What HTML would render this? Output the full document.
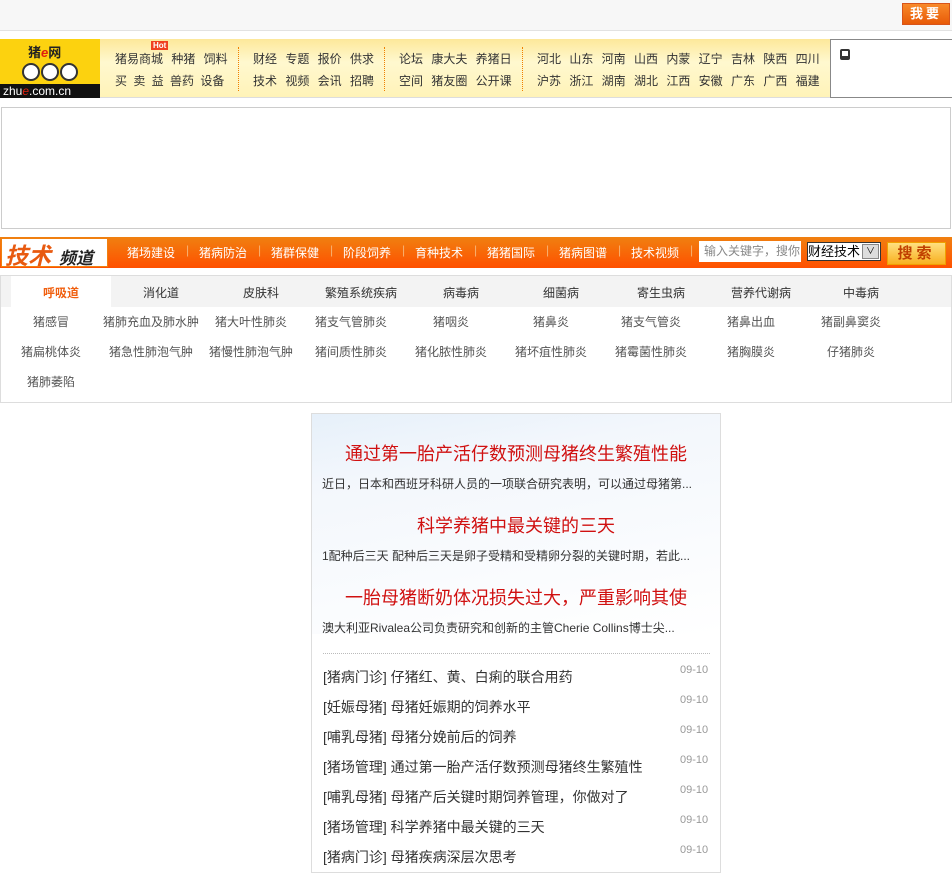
<!DOCTYPE html>
<html><head><meta charset="utf-8">
<style>
*{margin:0;padding:0;box-sizing:border-box}
body{width:952px;height:865px;overflow:hidden;background:#fff;font-family:"Liberation Sans","Noto Sans CJK SC","WenQuanYi Zen Hei",sans-serif;font-size:12px;color:#333;position:relative}
.a{position:absolute;white-space:nowrap}
.top{left:0;top:0;width:952px;height:31px;background:#f7f7f7;border-bottom:1px solid #e2e2e2}
.btn{left:902px;top:3px;width:48px;height:22px;background:linear-gradient(#f88a2a,#e85a08);border:1px solid #d8541a;color:#fff;font-weight:bold;font-size:13px;text-align:center;line-height:20px;letter-spacing:3px}
.hdr{left:100px;top:39px;width:730px;height:59px;background:linear-gradient(#fde89a,#fff8cf 40%,#fff3b8);border-bottom:1px solid #ddd}
.logo{left:0;top:39px;width:100px;height:59px;background:#fcd20f}
.nav{font-size:12px;color:#333;word-spacing:5px}
.dv{border-left:1px dotted #f08000;height:44px;top:47px}
.rbox{left:830px;top:39px;width:122px;height:59px;border:1px solid #888;border-right:none;background:#fff}
.ad{left:1px;top:107px;width:950px;height:122px;border:1px solid #ccc}
.obar{left:0;top:237px;width:952px;height:31px;background:linear-gradient(#f08010,#ff5000)}
.ob{color:#fff;font-size:12px;top:244px}
.sep{color:#f9b070;top:243px;font-size:12px}
.sub{left:0;top:275px;width:952px;height:128px;border:1px solid #ddd}
.tabs{left:1px;top:276px;width:950px;height:31px;background:#f3f3f3}
.tab{top:284px;width:100px;text-align:center;font-size:12px;color:#333}
.lk{width:100px;text-align:center;font-size:12px;color:#555}
.box{left:311px;top:413px;width:410px;height:460px;border:1px solid #ddd;background:linear-gradient(170deg,#e6f0fa 0,#f3f7fc 25%,#fff 100%) top/100% 220px no-repeat,#fff}
.t{left:311px;width:410px;text-align:center;color:#d01010;font-size:18px}
.d{left:322px;font-size:12px;color:#333}
.li{left:323px;font-size:14px;color:#333}
.dt{left:680px;font-size:11px;color:#999}
.c{position:absolute;top:24px;width:18px;height:18px;border-radius:50%;background:#fff;border:2px solid #333}
</style></head><body>
<div class="a top"></div>
<div class="a btn">我要</div>

<div class="a hdr"></div>
<div class="a logo">
  <div class="a" style="left:28px;top:3px;font-size:13px;color:#222;font-weight:bold">猪<span style="color:#e02010;font-style:italic">e</span>网</div>
  <div class="c" style="left:22px"></div>
  <div class="c" style="left:41px"></div>
  <div class="c" style="left:60px"></div>
  <div class="a" style="left:0;top:45px;width:100px;height:14px;background:#111;color:#fff;font-size:12px;line-height:14px;padding-left:3px">zhu<span style="color:#e02010;font-style:italic">e</span>.com.cn</div>
</div>
<div class="a" style="left:151px;top:41px;background:#f04020;color:#fff;font-size:8px;font-weight:bold;padding:0 2px;line-height:9px">Hot</div>
<div class="a nav" style="left:115px;top:50px">猪易商城 种猪 饲料</div>
<div class="a nav" style="left:115px;top:72px;word-spacing:3px">买 卖 益 兽药 设备</div>
<div class="a dv" style="left:238px"></div>
<div class="a nav" style="left:253px;top:50px">财经 专题 报价 供求</div>
<div class="a nav" style="left:253px;top:72px">技术 视频 会讯 招聘</div>
<div class="a dv" style="left:384px"></div>
<div class="a nav" style="left:399px;top:50px">论坛 康大夫 养猪日</div>
<div class="a nav" style="left:399px;top:72px">空间 猪友圈 公开课</div>
<div class="a dv" style="left:522px"></div>
<div class="a nav" style="left:537px;top:50px">河北 山东 河南 山西 内蒙 辽宁 吉林 陕西 四川</div>
<div class="a nav" style="left:537px;top:72px">沪苏 浙江 湖南 湖北 江西 安徽 广东 广西 福建</div>
<div class="a rbox"><div class="a" style="left:9px;top:9px;width:10px;height:11px;border:2px solid #333;border-bottom-width:4px;border-radius:2px"></div></div>

<div class="a ad"></div>

<div class="a obar"></div>
<div class="a" style="left:1px;top:238px;width:107px;height:29px;background:#fff;border:1px solid #f08010"><span class="a" style="left:3px;top:-2px;font-size:23px;color:#e85a10;font-style:italic;font-weight:bold">技术</span><span class="a" style="left:57px;top:5px;font-size:17px;color:#222;font-style:italic;font-weight:bold">频道</span></div>
<div class="a ob" style="left:127px">猪场建设</div><div class="a sep" style="left:186px">|</div>
<div class="a ob" style="left:199px">猪病防治</div><div class="a sep" style="left:258px">|</div>
<div class="a ob" style="left:271px">猪群保健</div><div class="a sep" style="left:330px">|</div>
<div class="a ob" style="left:343px">阶段饲养</div><div class="a sep" style="left:402px">|</div>
<div class="a ob" style="left:415px">育种技术</div><div class="a sep" style="left:474px">|</div>
<div class="a ob" style="left:487px">猪猪国际</div><div class="a sep" style="left:546px">|</div>
<div class="a ob" style="left:559px">猪病图谱</div><div class="a sep" style="left:618px">|</div>
<div class="a ob" style="left:631px">技术视频</div><div class="a sep" style="left:690px">|</div>
<div class="a" style="left:699px;top:241px;width:102px;height:21px;background:#fff;color:#888;font-size:12px;line-height:20px;padding-left:5px;overflow:hidden">输入关键字，搜你</div>
<div class="a" style="left:807px;top:242px;width:74px;height:19px;background:#fff;border:1px solid #333;font-size:13px;line-height:17px;color:#000">财经技术<span class="a" style="right:1px;top:1px;width:17px;height:15px;background:#ddd;border:1px solid #888;font-size:9px;text-align:center;line-height:13px">∨</span></div>
<div class="a" style="left:887px;top:242px;width:59px;height:23px;background:linear-gradient(#ffe080,#f8b020);border:1px solid #f0a000;color:#c04000;font-weight:bold;font-size:15px;text-align:center;line-height:21px;letter-spacing:4px">搜索</div>

<div class="a sub"></div>
<div class="a tabs"></div>
<div class="a" style="left:11px;top:276px;width:100px;height:31px;background:#fff"></div>
<div class="a tab" style="left:11px;color:#f06010;font-weight:bold">呼吸道</div>
<div class="a tab" style="left:111px">消化道</div>
<div class="a tab" style="left:211px">皮肤科</div>
<div class="a tab" style="left:311px">繁殖系统疾病</div>
<div class="a tab" style="left:411px">病毒病</div>
<div class="a tab" style="left:511px">细菌病</div>
<div class="a tab" style="left:611px">寄生虫病</div>
<div class="a tab" style="left:711px">营养代谢病</div>
<div class="a tab" style="left:811px">中毒病</div>

<div class="a lk" style="left:1px;top:313px">猪感冒</div>
<div class="a lk" style="left:101px;top:313px">猪肺充血及肺水肿</div>
<div class="a lk" style="left:201px;top:313px">猪大叶性肺炎</div>
<div class="a lk" style="left:301px;top:313px">猪支气管肺炎</div>
<div class="a lk" style="left:401px;top:313px">猪咽炎</div>
<div class="a lk" style="left:501px;top:313px">猪鼻炎</div>
<div class="a lk" style="left:601px;top:313px">猪支气管炎</div>
<div class="a lk" style="left:701px;top:313px">猪鼻出血</div>
<div class="a lk" style="left:801px;top:313px">猪副鼻窦炎</div>
<div class="a lk" style="left:1px;top:343px">猪扁桃体炎</div>
<div class="a lk" style="left:101px;top:343px">猪急性肺泡气肿</div>
<div class="a lk" style="left:201px;top:343px">猪慢性肺泡气肿</div>
<div class="a lk" style="left:301px;top:343px">猪间质性肺炎</div>
<div class="a lk" style="left:401px;top:343px">猪化脓性肺炎</div>
<div class="a lk" style="left:501px;top:343px">猪坏疽性肺炎</div>
<div class="a lk" style="left:601px;top:343px">猪霉菌性肺炎</div>
<div class="a lk" style="left:701px;top:343px">猪胸膜炎</div>
<div class="a lk" style="left:801px;top:343px">仔猪肺炎</div>
<div class="a lk" style="left:1px;top:373px">猪肺萎陷</div>

<div class="a box"></div>
<div class="a t" style="top:440px">通过第一胎产活仔数预测母猪终生繁殖性能</div>
<div class="a d" style="top:475px">近日，日本和西班牙科研人员的一项联合研究表明，可以通过母猪第...</div>
<div class="a t" style="top:512px">科学养猪中最关键的三天</div>
<div class="a d" style="top:547px">1配种后三天 配种后三天是卵子受精和受精卵分裂的关键时期，若此...</div>
<div class="a t" style="top:584px">一胎母猪断奶体况损失过大，严重影响其使</div>
<div class="a d" style="top:619px">澳大利亚Rivalea公司负责研究和创新的主管Cherie Collins博士尖...</div>
<div class="a" style="left:323px;top:653px;width:387px;border-top:1px dotted #bbb"></div>

<div class="a li" style="top:667px">[猪病门诊] 仔猪红、黄、白痢的联合用药</div><div class="a dt" style="top:664px">09-10</div>
<div class="a li" style="top:697px">[妊娠母猪] 母猪妊娠期的饲养水平</div><div class="a dt" style="top:694px">09-10</div>
<div class="a li" style="top:727px">[哺乳母猪] 母猪分娩前后的饲养</div><div class="a dt" style="top:724px">09-10</div>
<div class="a li" style="top:757px">[猪场管理] 通过第一胎产活仔数预测母猪终生繁殖性</div><div class="a dt" style="top:754px">09-10</div>
<div class="a li" style="top:787px">[哺乳母猪] 母猪产后关键时期饲养管理，你做对了</div><div class="a dt" style="top:784px">09-10</div>
<div class="a li" style="top:817px">[猪场管理] 科学养猪中最关键的三天</div><div class="a dt" style="top:814px">09-10</div>
<div class="a li" style="top:847px">[猪病门诊] 母猪疾病深层次思考</div><div class="a dt" style="top:844px">09-10</div>
</body></html>
